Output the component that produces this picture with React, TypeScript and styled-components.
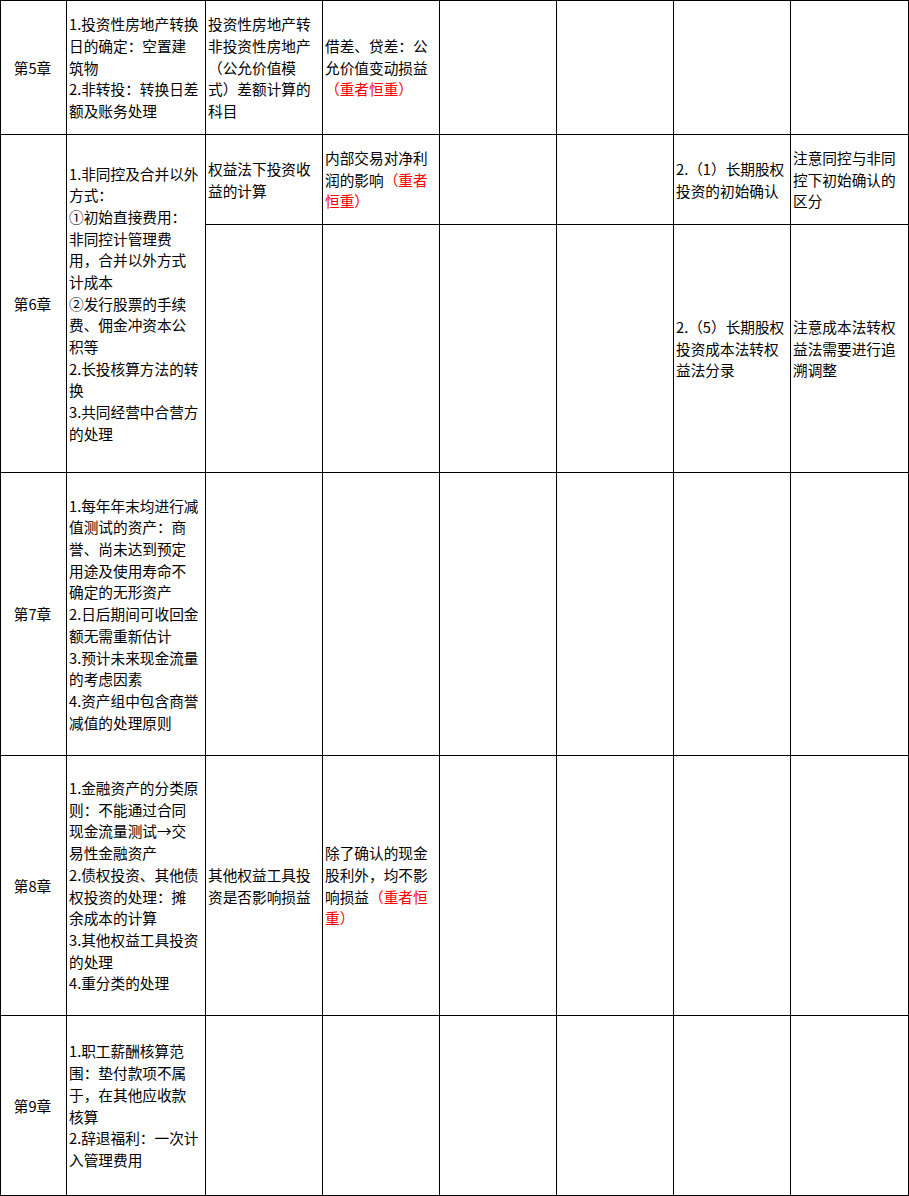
import { FC, Fragment } from 'react'
import styled, { createGlobalStyle } from 'styled-components'

const GlobalStyle = createGlobalStyle`
  html, body {
    margin: 0;
    padding: 0;
    background: #fff;
  }
  body {
    font-family: "Noto Sans CJK SC", "Noto Sans", sans-serif;
    color: #000;
    -webkit-font-smoothing: antialiased;
  }
`

const Table = styled.table`
  border-collapse: collapse;
  table-layout: fixed;
  width: 908px;
  font-size: 14.67px;
  line-height: 21.67px;
`

const Cell = styled.td<{ $center?: boolean }>`
  border: 1px solid #000;
  padding: 0 4px 0 2px;
  vertical-align: middle;
  text-align: ${(p) => (p.$center ? 'center' : 'left')};
  white-space: nowrap;
  overflow: hidden;
`

const Red = styled.span`
  color: #ff0000;
`

type Seg = string | { red: string }
type Line = string | Seg[]

interface RowData {
  height: number
  chapter?: string
  span?: number
  outline?: Line[]
  cells: Line[][]
}

const COLS = [66, 139, 117, 117, 117, 117, 117, 118]

const rows: RowData[] = [
  {
    height: 134,
    chapter: '第5章',
    outline: ['1.投资性房地产转换', '日的确定：空置建', '筑物', '2.非转投：转换日差', '额及账务处理'],
    cells: [
      ['投资性房地产转', '非投资性房地产', '（公允价值模', '式）差额计算的', '科目'],
      ['借差、贷差：公', '允价值变动损益', [{ red: '（重者恒重）' }]],
      [],
      [],
      [],
      [],
    ],
  },
  {
    height: 90,
    chapter: '第6章',
    span: 2,
    outline: [
      '1.非同控及合并以外',
      '方式：',
      '①初始直接费用：',
      '非同控计管理费',
      '用，合并以外方式',
      '计成本',
      '②发行股票的手续',
      '费、佣金冲资本公',
      '积等',
      '2.长投核算方法的转',
      '换',
      '3.共同经营中合营方',
      '的处理',
    ],
    cells: [
      ['权益法下投资收', '益的计算'],
      ['内部交易对净利', ['润的影响', { red: '（重者' }], [{ red: '恒重）' }]],
      [],
      [],
      ['2.（1）长期股权', '投资的初始确认'],
      ['注意同控与非同', '控下初始确认的', '区分'],
    ],
  },
  {
    height: 248,
    cells: [
      [],
      [],
      [],
      [],
      ['2.（5）长期股权', '投资成本法转权', '益法分录'],
      ['注意成本法转权', '益法需要进行追', '溯调整'],
    ],
  },
  {
    height: 283,
    chapter: '第7章',
    outline: [
      '1.每年年末均进行减',
      '值测试的资产：商',
      '誉、尚未达到预定',
      '用途及使用寿命不',
      '确定的无形资产',
      '2.日后期间可收回金',
      '额无需重新估计',
      '3.预计未来现金流量',
      '的考虑因素',
      '4.资产组中包含商誉',
      '减值的处理原则',
    ],
    cells: [[], [], [], [], [], []],
  },
  {
    height: 260,
    chapter: '第8章',
    outline: [
      '1.金融资产的分类原',
      '则：不能通过合同',
      '现金流量测试→交',
      '易性金融资产',
      '2.债权投资、其他债',
      '权投资的处理：摊',
      '余成本的计算',
      '3.其他权益工具投资',
      '的处理',
      '4.重分类的处理',
    ],
    cells: [
      ['其他权益工具投', '资是否影响损益'],
      ['除了确认的现金', '股利外，均不影', ['响损益', { red: '（重者恒' }], [{ red: '重）' }]],
      [],
      [],
      [],
      [],
    ],
  },
  {
    height: 180,
    chapter: '第9章',
    outline: ['1.职工薪酬核算范', '围：垫付款项不属', '于，在其他应收款', '核算', '2.辞退福利：一次计', '入管理费用'],
    cells: [[], [], [], [], [], []],
  },
]

const renderSeg = (s: Seg, i: number) =>
  typeof s === 'string' ? <Fragment key={i}>{s}</Fragment> : <Red key={i}>{s.red}</Red>

const Lines: FC<{ lines: Line[] }> = ({ lines }) => (
  <>
    {lines.map((line, i) => (
      <Fragment key={i}>
        {i > 0 && <br />}
        {typeof line === 'string' ? line : line.map(renderSeg)}
      </Fragment>
    ))}
  </>
)

const App: FC = () => {
  return (
    <>
      <GlobalStyle />
      <Table>
        <colgroup>
          {COLS.map((w, i) => (
            <col key={i} style={{ width: w }} />
          ))}
        </colgroup>
        <tbody>
          {rows.map((row, r) => (
            <tr key={r} style={{ height: row.height }}>
              {row.chapter && (
                <Cell $center rowSpan={row.span}>
                  {row.chapter}
                </Cell>
              )}
              {row.outline && (
                <Cell rowSpan={row.span}>
                  <Lines lines={row.outline} />
                </Cell>
              )}
              {row.cells.map((c, i) => (
                <Cell key={i}>
                  <Lines lines={c} />
                </Cell>
              ))}
            </tr>
          ))}
        </tbody>
      </Table>
    </>
  )
}

export default App
